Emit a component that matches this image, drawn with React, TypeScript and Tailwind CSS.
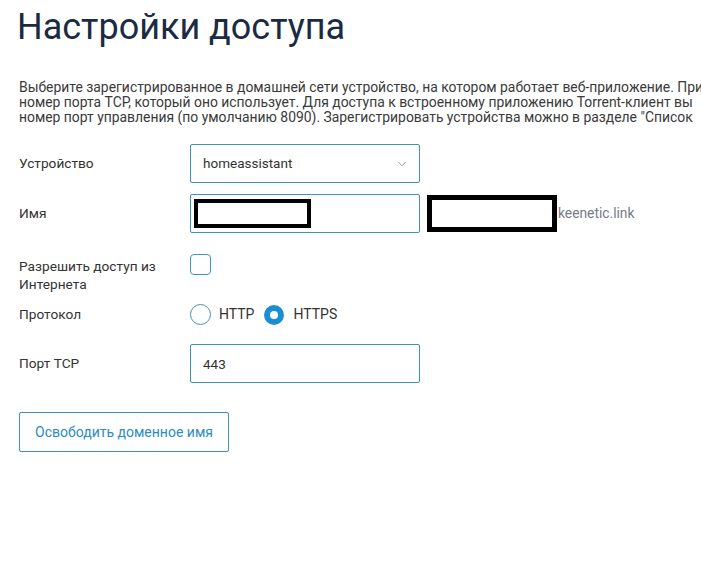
import { ChevronDown } from "lucide-react";

export default function App() {
    return (
        <div className="w-[701px] h-[563px] overflow-hidden bg-white font-['Roboto',sans-serif] text-[#333]">
            <h1 className="pl-[17px] pt-[5px] text-[36px] leading-[44px] font-normal text-[#1b2b44]">Настройки доступа</h1>

            {/* Description */}
            <div className="mt-[31px] pl-[19px] text-[13.9px] leading-[15px] text-[#3a3a3a] whitespace-nowrap overflow-hidden">
                <p>Выберите зарегистрированное в домашней сети устройство, на котором работает веб-приложение. При</p>
                <p>номер порта TCP, который оно использует. Для доступа к встроенному приложению Torrent-клиент вы</p>
                <p>номер порт управления (по умолчанию 8090). Зарегистрировать устройства можно в разделе "Список</p>
            </div>

            {/* Form */}
            <div className="mt-[19px] pl-[19px] text-[13.7px]">
                <div className="flex items-center">
                    <span className="w-[171px]">Устройство</span>
                    <div className="w-[230px] h-[39px] border border-[#3f93b3] rounded-[2px] flex items-center justify-between pl-[12px] pr-[10px]">
                        <span className="text-[13.5px] text-[#333]">homeassistant</span>
                        <ChevronDown className="w-[14px] h-[14px] text-[#7a93a8]" strokeWidth={1.5} />
                    </div>
                </div>

                <div className="flex items-center mt-[11px]">
                    <span className="w-[171px]">Имя</span>
                    <div className="w-[230px] h-[39px] border border-[#3f93b3] rounded-[2px] flex items-center pl-[3px]">
                        <div className="w-[117px] h-[29px] border-[4px] border-black" />
                    </div>
                    <div className="ml-[7px] w-[130px] h-[37px] border-[5px] border-black" />
                    <span className="ml-[1px] text-[13.8px] text-[#767b85]">keenetic.link</span>
                </div>

                <div className="flex items-start mt-[21px]">
                    <span className="w-[171px] leading-[18px] pt-[3px]">Разрешить доступ из<br />Интернета</span>
                    <div className="w-[21px] h-[21px] border border-[#3f93b3] rounded-[4px]" />
                </div>

                <div className="flex items-center mt-[11px]">
                    <span className="w-[171px]">Протокол</span>
                    <div className="flex items-center">
                        <span className="w-[21px] h-[21px] rounded-full border border-[#3f93b3]" />
                        <span className="ml-[8px] text-[14px]">HTTP</span>
                        <span className="ml-[10px] w-[20px] h-[20px] rounded-full bg-[#1a8ed1] flex items-center justify-center">
                            <span className="w-[8px] h-[8px] rounded-full bg-white" />
                        </span>
                        <span className="ml-[9px] text-[14px]">HTTPS</span>
                    </div>
                </div>

                <div className="flex items-center mt-[19px]">
                    <span className="w-[171px]">Порт TCP</span>
                    <div className="w-[230px] h-[39px] border border-[#3f93b3] rounded-[2px] flex items-center pl-[12px] pt-[2px]">
                        <span className="text-[13.5px]">443</span>
                    </div>
                </div>

                <button className="mt-[29px] w-[210px] h-[40px] border border-[#3f93b3] rounded-[2px] text-[14px] text-[#2b8cc4]">
                    Освободить доменное имя
                </button>
            </div>
        </div>
    );
}
